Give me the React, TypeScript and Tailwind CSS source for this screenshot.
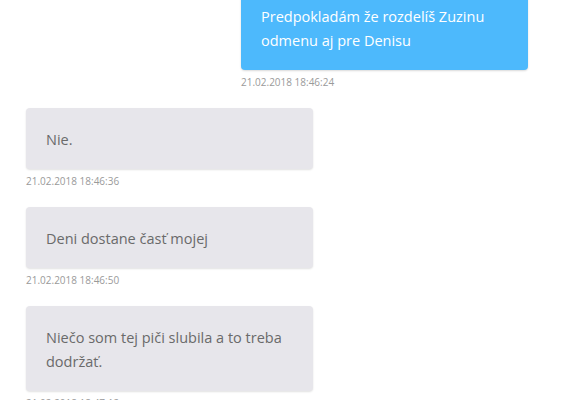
import * as React from "react"

type Message = {
  mine: boolean
  text: string
  time: string
}

const messages: Message[] = [
  { mine: true, text: "Predpokladám že rozdelíš Zuzinu odmenu aj pre Denisu", time: "21.02.2018 18:46:24" },
  { mine: false, text: "Nie.", time: "21.02.2018 18:46:36" },
  { mine: false, text: "Deni dostane časť mojej", time: "21.02.2018 18:46:50" },
  { mine: false, text: "Niečo som tej piči slubila a to treba dodržať.", time: "21.02.2018 18:47:12" },
]

export default function App() {
  return (
    <div className="w-[580px] h-[400px] overflow-hidden bg-white font-['Open_Sans',sans-serif]">
      <div className="flex flex-col gap-[18px] pl-[26px] pr-[52px] mt-[-15px]">
        {messages.map((m, i) => (
          <div key={i} className={m.mine ? "flex flex-col items-end" : "flex flex-col items-start"}>
            <div className="flex flex-col w-[287px]">
              <div
                className={
                  m.mine
                    ? "rounded-[4px] bg-[#4db9fc] text-white pt-[20px] pb-[17px] px-5 text-[14.5px] leading-6 shadow-[0_1px_2px_rgba(0,0,0,0.15)]"
                    : "rounded-[4px] bg-[#e7e6eb] text-[#6a6a6a] pt-[20px] pb-[17px] px-5 text-[14.5px] leading-6 shadow-[0_1px_2px_rgba(0,0,0,0.12)]"
                }
              >
                {m.text}
              </div>
              <div className="mt-1 text-[10px] leading-4 text-[#9a9a9a]">{m.time}</div>
            </div>
          </div>
        ))}
      </div>
    </div>
  )
}
